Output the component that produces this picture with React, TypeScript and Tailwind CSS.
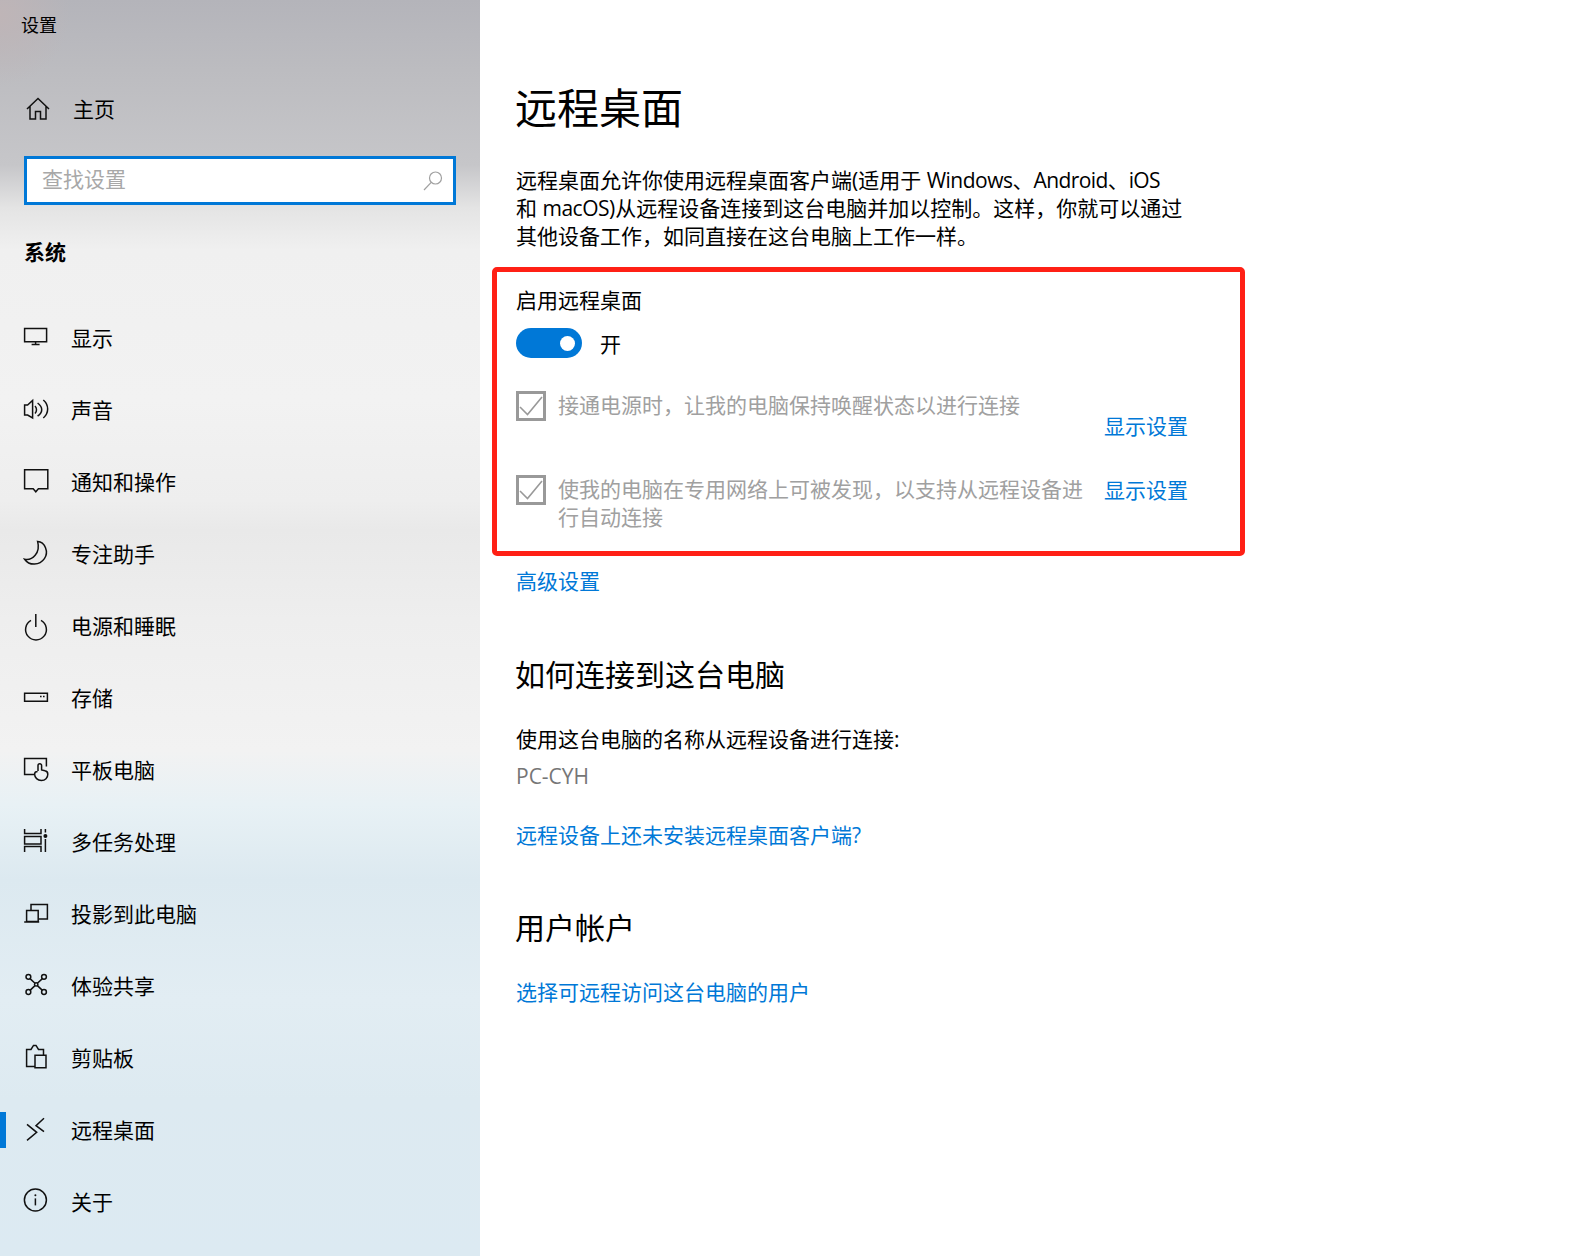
import React from 'react';

const Svg: React.FC<{ children: React.ReactNode }> = ({ children }) => (
  <svg
    viewBox="0 0 24 24"
    className="h-6 w-6 shrink-0 overflow-visible"
    fill="none"
    stroke="#111111"
    strokeWidth={1.5}
  >
    {children}
  </svg>
);

const navItems: { label: string; icon: React.ReactNode; active?: boolean }[] = [
  {
    label: '显示',
    icon: (
      <Svg>
        <path d="M.6 2.600h22v13.200H.6zM11.600 15.800v3M7.600 18.600h8" />
      </Svg>
    ),
  },
  {
    label: '声音',
    icon: (
      <Svg>
        <path d="M.6 7h3l5-4.500V20l-5-3h-3z" />
        <path d="M11 8c2 2 2 5.500 0 7.500M13.600 5c5.500 4 5.500 9.500 0 13M19.300 2c5.800 5 5.800 13 0 18" />
      </Svg>
    ),
  },
  {
    label: '通知和操作',
    icon: (
      <Svg>
        <path d="M.6-.2h23.200v19H14.400l-2.600 3-2.600-3H.6z" />
      </Svg>
    ),
  },
  {
    label: '专注助手',
    icon: (
      <Svg>
        <path d="M13.600-.6C21-.2 25 10 20.400 16.600 15.600 23.600 5.400 24 .6 17.200 8.200 18.800 16.800 11.200 13.600-.6z" />
      </Svg>
    ),
  },
  {
    label: '电源和睡眠',
    icon: (
      <Svg>
        <path d="M7 6.400A10.400 10.400 0 1 0 17 6.400M11.800 0v13" />
      </Svg>
    ),
  },
  {
    label: '存储',
    icon: (
      <Svg>
        <path d="M.6 7.200h22.800v8H.6zM16 10.400h1.600M19 10.400h1.600" />
      </Svg>
    ),
  },
  {
    label: '平板电脑',
    icon: (
      <Svg>
        <path d="M10.600 16.600H.6V.6h21.800v8" />
        <path d="M14 13V7.500a1.800 1.800 0 0 1 3.600 0V12l3.400.8c2 .4 2.800 1.800 2.800 3.400 0 3.500-2.600 6.300-6.400 6.300s-6.800-2.800-6.800-6.500c0-1.600 1-2.600 3-2.600" />
      </Svg>
    ),
  },
  {
    label: '多任务处理',
    icon: (
      <Svg>
        <path d="M.6-1v4.500h16.400V-1M.6 6.500h16.400V14H.6zM.6 22v-5.500h16.400V22M21.400-1v3.500M21.400 9v13" />
        <circle cx="21.400" cy="6" r="2" fill="#111111" stroke="none" />
      </Svg>
    ),
  },
  {
    label: '投影到此电脑',
    icon: (
      <Svg>
        <path d="M7 8V2.600h16.400v14.400H14.400" />
        <path d="M2.600 8.400h11.600v11H2.600zM.2 20h15" />
      </Svg>
    ),
  },
  {
    label: '体验共享',
    icon: (
      <Svg>
        <circle cx="4.400" cy="2.800" r="2.400" />
        <circle cx="20" cy="2.800" r="2.400" />
        <circle cx="4.400" cy="18" r="2.400" />
        <circle cx="20" cy="18" r="2.400" />
        <circle cx="12.200" cy="10.400" r="1.700" />
        <path d="M6 4.600l5 4.600M18.400 4.600l-5 4.600M6 16.400l5-4.800M18.400 16.400l-5-4.800" />
      </Svg>
    ),
  },
  {
    label: '剪贴板',
    icon: (
      <Svg>
        <path d="M11 20.500H2.600V3.400H7l2.500-4h2.500l2.500 4h5v5.900" />
        <path d="M11 9.300h11v12.500H11z" />
      </Svg>
    ),
  },
  {
    label: '远程桌面',
    active: true,
    icon: (
      <Svg>
        <path d="M3 6.300l9.700 8L3 22.300M20 .3l-8 7.400 8 6" />
      </Svg>
    ),
  },
  {
    label: '关于',
    icon: (
      <Svg>
        <circle cx="11.400" cy="10" r="11" />
        <path d="M11.400 8.400v7" />
        <circle cx="11.400" cy="5.200" r="1" fill="#111111" stroke="none" />
      </Svg>
    ),
  },
];

const Check = () => (
  <span className="flex h-[30px] w-[30px] shrink-0 items-center justify-center border-[3px] border-[#999999]">
    <svg viewBox="0 0 24 24" className="h-6 w-6" fill="none" stroke="#999999" strokeWidth={1.6}>
      <path d="M1 13l7.500 7.500L23 3" />
    </svg>
  </span>
);

export default function App() {
  return (
    <div
      lang="zh-CN"
      className="flex h-[1256px] w-[1580px] overflow-hidden bg-white font-['Open_Sans','Noto_Sans_CJK_SC',sans-serif] text-[21px] leading-[28px] text-black"
    >
      {/* Sidebar */}
      <aside className="flex w-[480px] shrink-0 flex-col bg-[radial-gradient(ellipse_70px_70px_at_0px_15px,#bfb5b7,transparent),linear-gradient(180deg,#b4b4ba_0px,#bcbcc0_70px,#c6c6c9_165px,#e4e4e4_208px,#f0f0f0_250px,#f2f2f2_400px,#eeeeee_500px,#e9e9e9_530px,#eeeeee_620px,#f2f2f2_750px,#e8f1f5_805px,#dce9f0_880px,#e2edf3_1000px,#ddeaf1_1100px,#dceaf2_1256px)]">
        <div className="pl-[21px] pt-[12px] text-[18px] leading-[26px]">设置</div>

        <div className="mt-[57px] flex h-[28px] items-center pl-[26px]">
          <svg viewBox="0 0 24 24" className="h-6 w-6 shrink-0" fill="none" stroke="#111111" strokeWidth={1.5}>
            <path d="M1 12L12 1.500 23 12M4 9.500V22h5.500v-7.500h5V22H20V9.500" />
          </svg>
          <span className="ml-[23px]">主页</span>
        </div>

        <div className="ml-[24px] mt-[33px] flex h-[49px] w-[432px] items-center justify-between border-[3px] border-[#0078d7] bg-white pl-[15px] pr-[10px]">
          <span className="-mt-[3px] text-[#a8a8a8]">查找设置</span>
          <svg viewBox="0 0 20 20" className="h-5 w-5" fill="none" stroke="#a0a0a0" strokeWidth={1.2}>
            <circle cx="12.500" cy="7" r="6" />
            <path d="M8.200 11.300L1 19" />
          </svg>
        </div>

        <div className="ml-[24px] mt-[33px] font-bold">系统</div>

        <nav className="mt-[36px] flex flex-col">
          {navItems.map((item) => (
            <div key={item.label} className="flex h-[72px] items-center">
              <span className={`h-[36px] w-[6px] shrink-0 ${item.active ? 'bg-[#0078d7]' : ''}`} />
              <span className="ml-[18px]">{item.icon}</span>
              <span className="ml-[23px]">{item.label}</span>
            </div>
          ))}
        </nav>
      </aside>

      {/* Content */}
      <main className="flex flex-col pl-[36px]">
        <h1 className="-ml-px mt-[80px] text-[42px] leading-[56px]">远程桌面</h1>
        <p className="mt-[30px] w-[670px]">
          远程桌面允许你使用远程桌面客户端(适用于 <span className="tracking-[-0.5px]">Windows</span>、
          <span className="tracking-[-0.6px]">Android</span>、<span className="tracking-[-0.6px]">iOS</span>
          <br />
          和 <span className="tracking-[-0.5px]">macOS</span>)从远程设备连接到这台电脑并加以控制。这样，你就可以通过
          <br />
          其他设备工作，如同直接在这台电脑上工作一样。
        </p>

        <section className="-ml-[24px] mt-[17px] w-[753px] rounded-[5px] border-[5px] border-[#ff2015] pb-[20px] pl-[19px] pt-[14px]">
          <div>启用远程桌面</div>
          <div className="mt-[14px] flex h-[30px] items-center">
            <span className="flex h-[30px] w-[66px] items-center justify-end rounded-full bg-[#0078d7] pr-[7px]">
              <span className="h-[15px] w-[15px] rounded-full bg-white" />
            </span>
            <span className="ml-[18px] mt-[2px]">开</span>
          </div>

          <div className="mt-[33px] flex h-[50px] items-start">
            <Check />
            <span className="ml-[12px] w-[546px] text-[#a0a0a0]">接通电源时，让我的电脑保持唤醒状态以进行连接</span>
            <a className="mb-px self-end text-[#0078d7]">显示设置</a>
          </div>

          <div className="mt-[34px] flex items-start">
            <Check />
            <span className="ml-[12px] w-[546px] pr-[18px] text-[#a0a0a0]">
              使我的电脑在专用网络上可被发现，以支持从远程设备进行自动连接
            </span>
            <a className="pt-[1px] text-[#0078d7]">显示设置</a>
          </div>
        </section>

        <a className="mt-[11px] text-[#0078d7]">高级设置</a>

        <h2 className="-ml-px mt-[60px] text-[30px] leading-[40px]">如何连接到这台电脑</h2>
        <p className="mt-[30px]">使用这台电脑的名称从远程设备进行连接:</p>
        <p className="mt-[9px] text-[#767676]">PC-CYH</p>
        <a className="mt-[31px] text-[#0078d7]">远程设备上还未安装远程桌面客户端?</a>

        <h2 className="-ml-px mt-[59px] text-[30px] leading-[40px]">用户帐户</h2>
        <a className="mt-[30px] text-[#0078d7]">选择可远程访问这台电脑的用户</a>
      </main>
    </div>
  );
}
